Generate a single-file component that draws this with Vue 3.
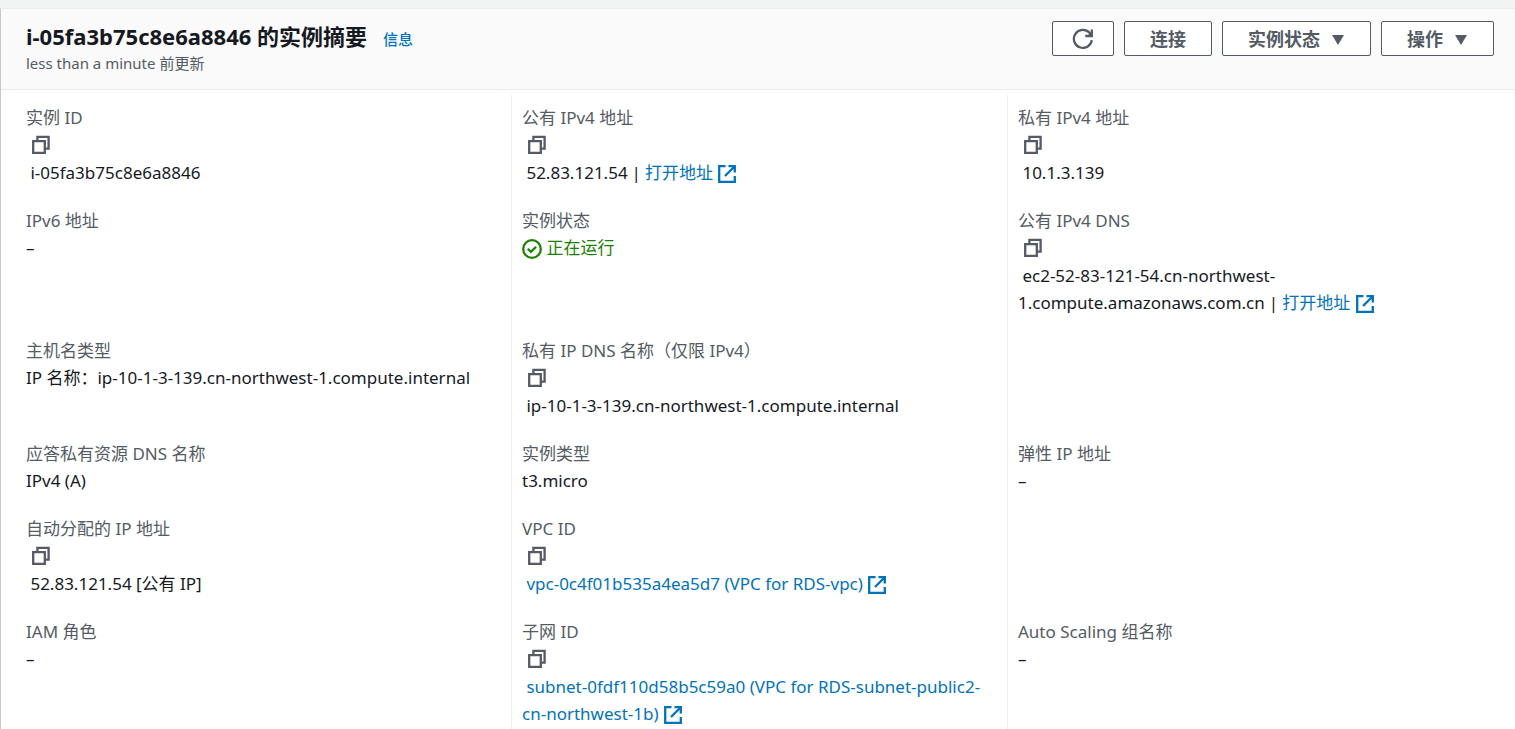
<script setup>
const rows = [
  [
    { label: '实例 ID', copy: true, text: 'i-05fa3b75c8e6a8846' },
    { label: '公有 IPv4 地址', copy: true, text: '52.83.121.54', sep: true, link: '打开地址' },
    { label: '私有 IPv4 地址', copy: true, text: '10.1.3.139' },
  ],
  [
    { label: 'IPv6 地址', text: '–' },
    { label: '实例状态', status: '正在运行' },
    { label: '公有 IPv4 DNS', copy: true, text: 'ec2-52-83-121-54.cn-northwest-1.compute.amazonaws.com.cn', sep: true, link: '打开地址' },
  ],
  [
    { label: '主机名类型', text: 'IP 名称：ip-10-1-3-139.cn-northwest-1.compute.internal' },
    { label: '私有 IP DNS 名称（仅限 IPv4）', copy: true, text: 'ip-10-1-3-139.cn-northwest-1.compute.internal' },
    null,
  ],
  [
    { label: '应答私有资源 DNS 名称', text: 'IPv4 (A)' },
    { label: '实例类型', text: 't3.micro' },
    { label: '弹性 IP 地址', text: '–' },
  ],
  [
    { label: '自动分配的 IP 地址', copy: true, text: '52.83.121.54 [公有 IP]' },
    { label: 'VPC ID', copy: true, link: 'vpc-0c4f01b535a4ea5d7 (VPC for RDS-vpc)' },
    null,
  ],
  [
    { label: 'IAM 角色', text: '–' },
    { label: '子网 ID', copy: true, link: 'subnet-0fdf110d58b5c59a0 (VPC for RDS-subnet-public2-cn-northwest-1b)' },
    { label: 'Auto Scaling 组名称', text: '–' },
  ],
]
</script>

<template>
  <main class="page">
    <section class="panel">
      <header class="head">
        <div class="titles">
          <div class="title-row">
            <h1>i-05fa3b75c8e6a8846 的实例摘要</h1>
            <a href="#" class="info">信息</a>
          </div>
          <p>less than a minute 前更新</p>
        </div>
        <div class="actions">
          <button type="button" class="btn refresh" aria-label="刷新">
            <svg width="22" height="22" viewBox="0 0 22 22" fill="none" stroke="currentColor" stroke-width="2.3">
              <path d="M19.800 12.200A9 9 0 1 1 17.500 4.800L19.500 7" />
              <path d="M19.800 1.500v6.500h-6.500" />
              <path d="M19.500 7.500L15.500 7.500 19.500 4z" fill="currentColor" stroke="none" />
            </svg>
          </button>
          <button type="button" class="btn">连接</button>
          <button type="button" class="btn">实例状态 <svg class="caret" width="14" height="16" viewBox="0 0 14 16"><path d="M1 5h12L7 15z" /></svg></button>
          <button type="button" class="btn">操作 <svg class="caret" width="14" height="16" viewBox="0 0 14 16"><path d="M1 5h12L7 15z" /></svg></button>
        </div>
      </header>
      <div class="grid">
        <template v-for="(row, r) in rows" :key="r">
          <dl v-for="(f, c) in row" :key="c" class="cell">
            <template v-if="f">
              <dt>{{ f.label }}</dt>
              <dd>
                <button v-if="f.copy" type="button" class="copy" :aria-label="'复制 ' + f.label">
                  <svg width="20" height="20" viewBox="0 0 20 20" fill="none" stroke="currentColor" stroke-width="2.3">
                    <path d="M2.200 6.200h11.600v11.600H2.200z" />
                    <path d="M6.400 6V1.900h11.200v11.700H14" />
                  </svg>
                </button>
                <span v-if="f.status" class="status"><svg width="20" height="20" viewBox="0 0 20 20" fill="none" stroke="currentColor" stroke-width="2.3"><circle cx="10" cy="10" r="8.800" /><path d="M5.800 9.800l3.100 3.100 5.200-5.200" /></svg> {{ f.status }}</span>
                <template v-if="f.copy">&nbsp;</template><span v-if="f.text">{{ f.text }}</span><span v-if="f.sep" class="sep">|</span><a v-if="f.link" href="#">{{ f.link }}&nbsp;<svg width="20" height="20" viewBox="0 0 20 20" fill="none" stroke="currentColor" stroke-width="2.3"><path d="M8.500 2.200H2.200v15.600h15.600V12" /><path d="M11.500 2.200h6.300v6.300M17.500 2.500L8 12" /></svg></a>
              </dd>
            </template>
          </dl>
        </template>
      </div>
    </section>
  </main>
</template>

<style>
body {
  margin: 0;
  background: #f2f3f3;
}
</style>

<style scoped>
.page {
  box-sizing: border-box;
  height: 100vh;
  overflow: hidden;
  padding-top: 8px;
  font-family: "Noto Sans", "Noto Sans CJK SC", sans-serif;
  font-size: 17px;
  color: #16191f;
}
.panel {
  border-left: 1px solid #c4c9ca;
  border-top: 1px solid #eaeded;
  background: #fff;
}
.head {
  display: flex;
  justify-content: space-between;
  align-items: flex-start;
  padding: 12px 21px 14px 25px;
  background: #fafafa;
  border-bottom: 1px solid #eaeded;
}
.title-row {
  display: flex;
  align-items: baseline;
  gap: 16px;
}
h1 {
  margin: 0;
  font-size: 22px;
  line-height: 30px;
  font-weight: 700;
}
.info {
  font-size: 15px;
  line-height: 20px;
  font-weight: 500;
}
p {
  margin: 0;
  font-size: 15px;
  line-height: 24px;
  color: #545b64;
}
.actions {
  display: flex;
  gap: 10px;
}
.btn {
  display: flex;
  align-items: center;
  gap: 11px;
  height: 35px;
  padding: 0 25px 2px;
  border: 1px solid #545b64;
  border-radius: 2px;
  background: #fff;
  color: #545b64;
  font: 700 18px "Noto Sans", "Noto Sans CJK SC", sans-serif;
}
.refresh {
  padding: 0 19px;
}
.caret {
  fill: currentColor;
}
.grid {
  display: grid;
  grid-template-columns: repeat(3, minmax(0, 1fr));
  padding: 5px 12px 0 14px;
}
.cell {
  margin: 0;
  padding: 0 10px 21px;
  border-left: 1px solid #eaeded;
}
.cell:nth-child(3n + 1) {
  border-left: 0;
  padding-left: 11px;
}
.cell:nth-child(-n + 3) {
  padding-top: 9px;
}
dt {
  line-height: 27px;
  color: #545b64;
}
dd {
  margin: 0;
  line-height: 27px;
}
dd svg {
  vertical-align: -5px;
}
a {
  color: #0073bb;
  text-decoration: none;
}
.status {
  color: #1d8102;
}
.sep {
  margin: 0 4px;
}
.copy {
  display: flex;
  align-items: center;
  height: 28px;
  padding: 0 5px;
  border: 0;
  background: none;
  color: #545b64;
}
</style>
